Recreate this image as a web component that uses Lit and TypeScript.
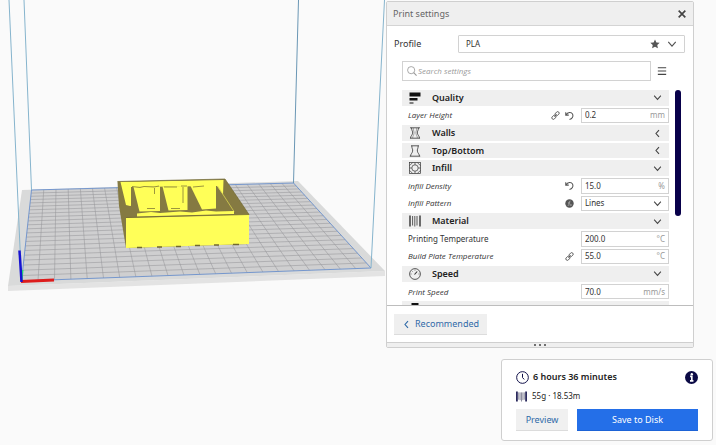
import { LitElement, css, html, svg, type TemplateResult } from "lit";
import { customElement, property } from "lit/decorators.js";

type Point = [number, number];

const icon = (name: string): TemplateResult => {
  const shapes: Record<string, TemplateResult> = {
    close: svg`<path d="M2 2 10 10M10 2 2 10" stroke-width="2"/>`,
    down: svg`<path d="M1.5 3.5 6 8.5 10.5 3.5" stroke-width="1.4"/>`,
    left: svg`<path d="M8 1.5 4 6 8 10.5" stroke-width="1.5"/>`,
    star: svg`<path d="M6 .5 7.7 4.2 11.6 4.6 8.7 7.2 9.5 11.2 6 9.2 2.5 11.2 3.3 7.2.4 4.6 4.3 4.2Z" fill="currentColor" stroke="none"/>`,
    menu: svg`<path d="M1 2H11M1 6H11M1 10H11" stroke-width="1.3"/>`,
    search: svg`<circle cx="5" cy="5" r="4.3"/><path d="M8 8 11.5 11.5" stroke-width="1.3"/>`,
    undo: svg`<path d="M1 1.5V5.5H5M1.3 5.2C3.5 1.2 8.5.8 10.2 4.3 11.5 7.5 9.5 10.6 6 11.2" stroke-width="1.4"/>`,
    link: svg`<rect x="5.2" y="1.6" width="6" height="4" rx="2" transform="rotate(-45 8.2 3.6)" stroke-width="1.2"/><rect x=".8" y="6.4" width="6" height="4" rx="2" transform="rotate(-45 3.8 8.4)" stroke-width="1.2"/><path d="M4.4 7.6 7.6 4.4" stroke-width="1.2"/>`,
    formula: svg`<circle cx="6" cy="6" r="5.6" fill="currentColor" stroke="none"/><path d="M7.4 2.8C6 2.4 5.7 3.6 5.4 5.5 5.2 7.6 5 9 3.7 8.8M4 5.3H7M6.6 7 8.6 9M8.6 7 6.6 9" stroke="#c9c9c9" stroke-width=".8"/>`,
    quality: svg`<path d="M.5 .5H11.5V4.5H.5ZM.5 6H8.5V8.5H.5ZM.5 10.5H4.5V11.5H.5Z" fill="#111" stroke="none"/>`,
    walls: svg`<g stroke-width=".8"><path d="M1 .8H11M1 11.2H11M2.5 .8C2.5 3.8 4 4 3.6 6.2 3.2 8.4 1.8 8.6 1.5 11.2M9.5 .8C9.5 3.8 8 4 8.4 6.2 8.8 8.4 10.2 8.6 10.5 11.2"/><path d="M4.3 1C4.3 4 5.4 4.5 5 6.5 4.6 8.5 3.8 9 3.6 11M7.7 1C7.7 4 6.6 4.5 7 6.5 7.4 8.5 8.2 9 8.4 11" stroke-width=".4"/></g>`,
    shell: svg`<path stroke-width=".8" d="M2 .8H10M.8 11.2H11.2M2.8 .8C2.8 3.8 4 4 3.6 6.2 3.2 8.4 1.8 8.6 1.5 11.2M9.2 .8C9.2 3.8 8 4 8.4 6.2 8.8 8.4 10.2 8.6 10.5 11.2"/>`,
    infill: svg`<g stroke-width=".7"><rect x=".6" y=".6" width="10.8" height="10.8"/><circle cx="6" cy="6" r="3.2"/><path d="M.6 3.6 3.6.6M8.4.6 11.4 3.6M.6 8.4 3.6 11.4M8.4 11.4 11.4 8.4M6 .6V2.8M6 9.2V11.4M.6 6H2.8M9.2 6H11.4"/></g>`,
    material: svg`<path d="M1 .5V11.5M11 .5V11.5" stroke-width="1.4"/><path d="M3.6 1V10.5M5.8 1V11.5M8 1V10.5" stroke-width=".8"/>`,
    spool: svg`<path d="M1 .5V11.5M11 .5V11.5" stroke-width="1.7"/><path d="M3 1.5V9.5M4.5 1.5V10M6 1.5V11.5M7.5 1.5V10M9 1.5V9.5" stroke="#77778c" stroke-width=".9"/>`,
    speed: svg`<circle cx="6" cy="6" r="5.4" stroke-width=".8"/><path d="M5.5 6.5 8.2 3.5" stroke-width="1.1"/><path d="M6 1.6V2.6M1.6 6H2.6M9.4 6H10.4M3 3 3.6 3.6" stroke-width=".6"/>`,
    travel: svg`<path d="M2.5 0H9.5V4H8V7H4V4H2.5Z" fill="#111" stroke="none"/>`,
    clock: svg`<circle cx="6" cy="6" r="5.4" stroke-width=".9"/><path d="M6 2.6V6L7.6 7.8" stroke-width=".9"/>`,
    info: svg`<circle cx="6" cy="6" r="6" fill="currentColor" stroke="none"/><circle cx="6.3" cy="2.9" r="1.1" fill="#fff" stroke="none"/><path d="M4.7 5H6.3V9M4.6 9.1H7.8" stroke="#fff" stroke-width="1.5"/>`,
  };
  return html`<svg class="icon" viewBox="0 0 12 12" aria-hidden="true" fill="none" stroke="currentColor">${shapes[name]}</svg>`;
};

const iconStyles = css`
  .icon { display: block; width: 12px; height: 12px; flex: none; }
  .small .icon { width: 9px; height: 9px; }
`;

/** Corners of the build plate as the camera sees it. */
const PLATE: { backLeft: Point; backRight: Point; frontRight: Point; frontLeft: Point } = {
  backLeft: [31.5, 190],
  backRight: [293.5, 183],
  frontRight: [371, 268],
  frontLeft: [21.5, 281],
};

/** Maps a point of the unit square onto the plate in perspective. */
function project(u: number, v: number): Point {
  const [x0, y0] = PLATE.frontLeft;
  const [x1, y1] = PLATE.frontRight;
  const [x2, y2] = PLATE.backRight;
  const [x3, y3] = PLATE.backLeft;
  const dx1 = x1 - x2, dx2 = x3 - x2, sx = x0 - x1 + x2 - x3;
  const dy1 = y1 - y2, dy2 = y3 - y2, sy = y0 - y1 + y2 - y3;
  const den = dx1 * dy2 - dx2 * dy1;
  const g = (sx * dy2 - dx2 * sy) / den;
  const h = (dx1 * sy - sx * dy1) / den;
  const w = g * u + h * v + 1;
  return [
    ((x1 - x0 + g * x1) * u + (x3 - x0 + h * x3) * v + x0) / w,
    ((y1 - y0 + g * y1) * u + (y3 - y0 + h * y3) * v + y0) / w,
  ];
}

@customElement("build-scene")
export class BuildScene extends LitElement {
  static styles = css`
    :host { display: block; }
    .view { display: block; width: 400px; height: 300px; }
  `;

  private line(a: Point, b: Point) {
    return svg`<line x1=${a[0]} y1=${a[1]} x2=${b[0]} y2=${b[1]} />`;
  }

  render() {
    const cells = 22;
    const steps = Array.from({ length: cells - 1 }, (_, i) => (i + 1) / cells);
    return html`
      <svg class="view" viewBox="0 0 400 300" role="img" aria-label="Model on the build plate">
        <polygon points="8,286 385,271 385,276 8,291" fill="#e3e3e3" />
        <polygon points="22,190 298,181 385,271 8,286" fill="#d9dada" />
        <polygon points="31.5,190 293.5,183 371,268 21.5,281" fill="#cfcfd0" />
        <g stroke="#97979a" stroke-width=".55">
          ${steps.map((t) => this.line(project(t, 0), project(t, 1)))}
          ${steps.map((t) => this.line(project(0, t), project(1, t)))}
        </g>
        <polygon points="31.5,190 293.5,183 371,268 21.5,281" fill="none" stroke="#6a90cc" stroke-width=".9" />
        <g fill="none" stroke="#86b4cd" stroke-width="1">
          <path d="M9 0 21.5 281M24 0 31.5 190M384.5 0 371 268" />
          <path d="M298.5 0 293.5 183" stroke="#6a97b5" />
        </g>
        <path d="M21.5 281 22.5 270" stroke="#28e070" stroke-width="2" />
        <path d="M21 281.5 54 280" stroke="#dd1c1c" stroke-width="3" />
        <path d="M21.5 282 19.5 250.5" stroke="#1712d2" stroke-width="2.5" />

        <polygon points="117.5,181.5 225,179 249,214.5 249,244 126,248 119,206" fill="#857a42" />
        <polygon points="120.5,182 223.5,180 223,195 218,190 130,206 126,205" fill="#ffff58" />
        <polygon points="131,187 217,186 235,212 140,215 131,215" fill="#857a42" />
        <polygon points="133.5,187 160,186.5 160,211 139.5,211.5" fill="#ffff58" />
        <polygon points="162.5,186.500 187.500,186 187.500,210 168.5,210.5" fill="#ffff58" />
        <polygon points="190.500,186 216,185 216,208.5 202,209.5" fill="#ffff58" />
        <path d="M217.5 186 234 211.5" stroke="#d8d250" stroke-width=".8" />
        <polygon points="137,213.5 151,212 160,213 180,211.5 192,212.5 206,210.5 216,211.5 234,211 234,214 137,216.5" fill="#ffff58" />
        <polygon points="126,218 249,214.5 249,244 126,248" fill="#ffff58" />
        <g fill="none" stroke="#716832" stroke-width=".7">
          <path d="M117.5 181.5 225 179 249 214.5M126 217.5 249 214.5" />
          <path d="M132 186.5 140 187.5 144 186.5 154 187 159 186M164 187 177 187M181 186 187 186M193 187 204 186M154.5 188V194M183 187V203M147 208.5H155M171 208.5H180" />
          <path d="M137 247.5H142M157 247H162M176 246.5H181M195 245.5H200M214 245H219M233 244.5H239" stroke-width="1.4" />
        </g>
      </svg>
    `;
  }
}

@customElement("category-row")
export class CategoryRow extends LitElement {
  @property() label = "";
  @property() glyph = "";
  @property({ type: Boolean }) open = false;

  static styles = [
    iconStyles,
    css`
      :host { display: block; min-height: 0; }
      .head {
        display: flex; align-items: center; box-sizing: border-box;
        width: 100%; height: 100%; padding: 0 7px; gap: 11px;
        border: 0; background: #efefef; color: #333;
        font: 600 9px/14px "Noto Sans", sans-serif; text-align: left;
      }
      .name { flex: 1; color: #222; }
      .small { color: #444; }
    `,
  ];

  render() {
    return html`<button class="head" aria-expanded=${this.open ? "true" : "false"}>
      ${icon(this.glyph)}<span class="name">${this.label}</span>
      <span class="small">${icon(this.open ? "down" : "left")}</span>
    </button>`;
  }
}

@customElement("setting-row")
export class SettingRow extends LitElement {
  @property() label = "";
  @property() value = "";
  @property() unit = "";
  @property({ type: Array }) marks: string[] = [];
  @property({ type: Boolean }) plain = false;
  @property({ type: Boolean }) choice = false;

  static styles = [
    iconStyles,
    css`
      :host { display: flex; align-items: center; min-height: 0; color: #333; font: 8px/12px "Noto Sans", sans-serif; }
      .name { flex: 1; padding-left: 6px; font-family: "Open Sans", "Noto Sans", sans-serif; font-style: italic; white-space: nowrap; }
      .plain { font-family: "Noto Sans", sans-serif; font-style: normal; }
      .marks { display: flex; gap: 5px; margin-right: 7px; color: #555; }
      .field {
        display: flex; align-items: center; box-sizing: border-box; width: 33%; height: 100%;
        padding: 0 3px; border: 1px solid #d2d2d2; background: #fff;
      }
      .entry {
        flex: 1; min-width: 0; width: 0; padding: 0; border: 0; outline: 0; background: none;
        appearance: none; color: #333; font: inherit;
      }
      .unit { color: #999; }
      .arrow { margin-right: 3px; color: #444; }
    `,
  ];

  render() {
    return html`
      <label class="name ${this.plain ? "plain" : ""}" for="entry">${this.label}</label>
      <span class="marks small">${this.marks.map((m) => icon(m))}</span>
      <span class="field">
        ${this.choice
          ? html`<select class="entry" id="entry"><option>${this.value}</option></select><span class="arrow small">${icon("down")}</span>`
          : html`<input class="entry" id="entry" .value=${this.value} /><span class="unit">${this.unit}</span>`}
      </span>
    `;
  }
}

@customElement("settings-panel")
export class SettingsPanel extends LitElement {
  static styles = [
    iconStyles,
    css`
      :host {
        display: block; box-sizing: border-box; border: 1px solid #cfcfcf; border-radius: 2px;
        background: #fff; color: #333; font: 9px/14px "Noto Sans", sans-serif;
        overflow: hidden;
      }
      .title {
        display: flex; align-items: center; justify-content: space-between; height: 24px; box-sizing: border-box;
        padding: 0 6px; border-bottom: 1px solid #d4d4d4; background: #efefef; color: #666;
      }
      .heading { margin: 0; font: inherit; }
      .bare { display: block; padding: 0; border: 0; background: none; color: #444; }
      .title .icon { width: 10px; height: 10px; }
      .profile { display: flex; align-items: center; padding: 9px 8px 0 7px; }
      .caption { flex: 1; }
      .picker {
        display: flex; align-items: center; gap: 7px; box-sizing: border-box; width: 78%; height: 18px;
        padding: 0 7px; border: 1px solid #d2d2d2; border-radius: 1px; color: #555;
      }
      .picker .icon { width: 10px; height: 10px; }
      .value {
        flex: 1; min-width: 0; padding: 0; border: 0; outline: 0; background: none; appearance: none;
        color: #333; font: 8px/12px "Noto Sans", sans-serif;
      }
      .filter { display: flex; align-items: center; gap: 6px; padding: 8px 26px 0 15px; }
      .search {
        flex: 1; display: flex; align-items: center; gap: 1px; box-sizing: border-box; height: 20px;
        padding: 0 4px; border: 1px solid #d2d2d2; color: #999;
      }
      .search .icon { width: 10px; height: 10px; }
      .query {
        flex: 1; min-width: 0; padding: 0; border: 0; outline: 0; background: none;
        color: #333; font: italic 8px/12px "Open Sans", "Noto Sans", sans-serif;
      }
      .query::placeholder { color: #999; opacity: 1; }
      .filter .bare .icon { width: 10px; height: 10px; }
      .body { display: flex; gap: 6px; height: 224px; padding: 9px 12px 0 15px; box-sizing: border-box; }
      .viewport { flex: 1; overflow: hidden; }
      .list { display: grid; grid-template-rows: repeat(13, minmax(0, 1fr)); gap: 2px; height: 227px; }
      .thumb { width: 6px; height: 126px; border-radius: 3px; background: #08004a; }
      .foot { padding: 8px 7px 7px; border-top: 1px solid #bdbdbd; }
      .back {
        display: flex; align-items: center; gap: 4px; height: 21px; padding: 0 8px;
        border: 0; border-bottom: 1px solid #dcdcdc; background: #efefef; color: #2f6aa8;
        font: 9px/14px "Noto Sans", sans-serif;
      }
      .grip {
        display: flex; align-items: center; justify-content: center; gap: 3px; height: 5px; box-sizing: border-box;
        border-top: 1px solid #cfcfcf; background: #efefef;
      }
      .dot { width: 2px; height: 2px; border-radius: 1px; background: #444; }
    `,
  ];

  render() {
    return html`
      <header class="title">
        <h2 class="heading">Print settings</h2>
        <button class="bare" aria-label="Close">${icon("close")}</button>
      </header>
      <div class="profile">
        <label class="caption" for="profile">Profile</label>
        <div class="picker">
          <select class="value" id="profile"><option>PLA</option></select>
          ${icon("star")}${icon("down")}
        </div>
      </div>
      <div class="filter">
        <div class="search">
          ${icon("search")}
          <input class="query" type="search" placeholder="Search settings" aria-label="Search settings" />
        </div>
        <button class="bare" aria-label="Setting visibility">${icon("menu")}</button>
      </div>
      <div class="body">
        <div class="viewport">
          <div class="list">
            <category-row label="Quality" glyph="quality" open></category-row>
            <setting-row label="Layer Height" .marks=${["link", "undo"]} value="0.2" unit="mm"></setting-row>
            <category-row label="Walls" glyph="walls"></category-row>
            <category-row label="Top/Bottom" glyph="shell"></category-row>
            <category-row label="Infill" glyph="infill" open></category-row>
            <setting-row label="Infill Density" .marks=${["undo"]} value="15.0" unit="%"></setting-row>
            <setting-row label="Infill Pattern" .marks=${["formula"]} value="Lines" choice></setting-row>
            <category-row label="Material" glyph="material" open></category-row>
            <setting-row label="Printing Temperature" plain value="200.0" unit="°C"></setting-row>
            <setting-row label="Build Plate Temperature" .marks=${["link"]} value="55.0" unit="°C"></setting-row>
            <category-row label="Speed" glyph="speed" open></category-row>
            <setting-row label="Print Speed" value="70.0" unit="mm/s"></setting-row>
            <category-row glyph="travel" open></category-row>
          </div>
        </div>
        <div class="thumb"></div>
      </div>
      <footer class="foot">
        <button class="back"><span class="small">${icon("left")}</span>Recommended</button>
      </footer>
      <div class="grip">${[0, 1, 2].map(() => html`<span class="dot"></span>`)}</div>
    `;
  }
}

@customElement("job-card")
export class JobCard extends LitElement {
  static styles = [
    iconStyles,
    css`
      :host {
        display: flex; flex-direction: column; box-sizing: border-box; padding: 10px 14px 9px;
        border: 1px solid #cfcfcf; border-radius: 3px; background: #fff; color: #222;
        font: 8px/12px "Noto Sans", sans-serif;
      }
      .row { display: flex; align-items: center; gap: 4px; height: 14px; }
      .row .icon { color: #0b0a45; }
      .time { flex: 1; font-size: 9px; font-weight: 600; }
      .first .icon { width: 13px; height: 13px; }
      .second { margin: 5px 0 6px; }
      .second .icon { width: 11px; height: 11px; margin-right: 1px; }
      .bare { padding: 0; border: 0; background: none; }
      .actions { display: grid; grid-template-columns: 52px 1fr; gap: 9px; }
      .action {
        height: 22px; padding: 0; border: 0; border-bottom: 1px solid #dcdcdc; background: #f0f0f0; color: #2f6aa8;
        font: 9px/14px "Noto Sans", sans-serif;
      }
      .primary { border-color: #1d63d6; background: #246fe8; color: #fff; }
    `,
  ];

  render() {
    return html`
      <div class="row first">
        ${icon("clock")}<span class="time">6 hours 36 minutes</span>
        <button class="bare" aria-label="Print details">${icon("info")}</button>
      </div>
      <div class="row second">${icon("spool")}<span>55g · 18.53m</span></div>
      <div class="actions">
        <button class="action">Preview</button>
        <button class="action primary">Save to Disk</button>
      </div>
    `;
  }
}

@customElement("app-root")
export class AppRoot extends LitElement {
  static styles = css`
    :host { display: block; position: relative; min-height: 100vh; background: #fafafa; overflow: hidden; }
    .scene { position: absolute; inset: 0; }
    .dock {
      position: relative; display: flex; flex-direction: column; align-items: flex-end; justify-content: space-between;
      gap: 10px; box-sizing: border-box; min-height: 100vh; padding: 1px 3px 4px 0;
    }
    .panel { box-sizing: border-box; width: 43.2%; min-width: 280px; margin-right: 19px; }
    .job { width: 212px; }
  `;

  render() {
    return html`
      <build-scene class="scene"></build-scene>
      <main class="dock">
        <settings-panel class="panel"></settings-panel>
        <job-card class="job"></job-card>
      </main>
    `;
  }
}
